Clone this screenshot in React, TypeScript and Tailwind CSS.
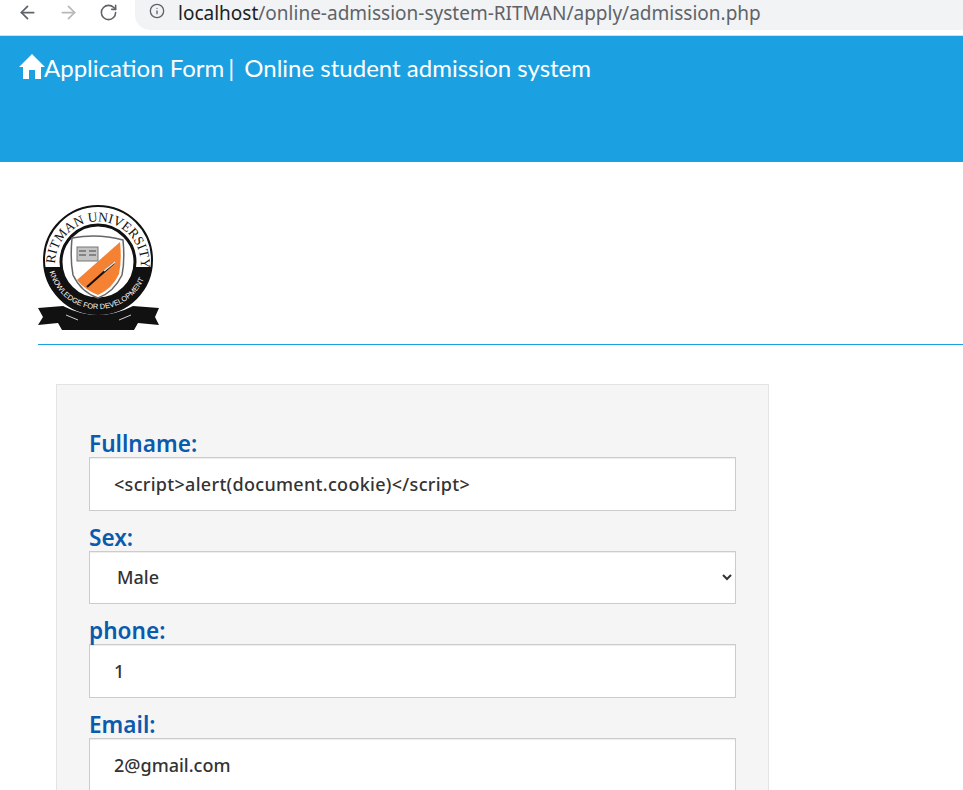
import React from 'react';
import { ArrowLeft, ArrowRight, RotateCw, Info } from 'lucide-react';

const Logo = () => (
  <svg width="121" height="125" viewBox="0 0 121 125">
    <defs>
      <path id="topArc" d="M 17.5 66 A 43 43 0 1 1 102.5 66" />
      <path id="bottomArc" d="M 11 64 A 50 50 0 0 0 109 64" />
    </defs>
    <circle cx="60" cy="55" r="54" fill="#fff" stroke="#111" strokeWidth="2" />
    <path d="M 6.5 62 A 54 54 0 0 0 113.5 62 L 98 62 L 92 50 L 28 50 L 22 62 Z" fill="#111" />
    <text fontFamily="Liberation Serif, serif" fontSize="13.5" fill="#111">
      <textPath href="#topArc" startOffset="5%">RITMAN UNIVERSITY</textPath>
    </text>
    <circle cx="60" cy="57" r="37" fill="#fff" stroke="#111" strokeWidth="3" />
    <text fontFamily="Liberation Sans, sans-serif" fontSize="7.4" fill="#fff">
      <textPath href="#bottomArc" startOffset="2%">KNOWLEDGE FOR DEVELOPMENT</textPath>
    </text>
    <path d="M 34 33 Q 60 28 85 35 Q 87 55 84 70 Q 76 87 60 93 Q 43 87 35 70 Q 32 55 34 33 Z" fill="#fff" stroke="#666" strokeWidth="1.5" />
    <path d="M 82 37 Q 84 55 81 69 Q 74 84 60 90 Q 47 85 39 75 Z" fill="#f58233" />
    <path d="M 49 82 L 76 58" stroke="#111" strokeWidth="2.2" />
    <path d="M 66 66 L 77 57" stroke="#e8e8e8" strokeWidth="1.6" />
    <rect x="39" y="42" width="21" height="14" fill="#c4c4c4" stroke="#777" />
    <path d="M 41 46 H 48 M 41 50 H 48 M 51 46 H 58 M 51 50 H 58" stroke="#444" />
    <path d="M 0 103 L 25 101 Q 60 119 95 101 L 121 103 L 117 112 L 121 120 L 100 118 L 96 125 L 24 125 L 20 118 L 0 120 L 5 112 Z" fill="#111" />
    <path d="M 28 110 L 40 115 M 93 110 L 81 115" stroke="#fff" strokeWidth="0.8" />
  </svg>
);

const labelClass = 'block h-[30px] text-[22.6px] leading-[33px] font-semibold text-[#0a5aad]';
const fieldClass =
  'block w-full h-[53.67px] border border-[#cccccc] bg-white text-[18px] font-medium text-[#333333] outline-none shadow-[inset_0_1px_1px_rgba(0,0,0,0.075)]';

const Field = ({ label, value, wide }: { label: string; value: string; wide?: boolean }) => (
  <div className="mb-[10px]">
    <label className={labelClass}>{label}</label>
    <input
      readOnly
      value={value}
      className={`${fieldClass} px-6 font-['Noto_Sans',sans-serif] ${wide ? 'tracking-[0.3px]' : ''}`}
    />
  </div>
);

export default function App() {
  return (
    <div className="h-[790px] w-[963px] overflow-hidden bg-white font-['Noto_Sans',sans-serif]">
      <div className="flex h-9 items-start border-b border-[#dcdcdc] bg-white">
        <div className="flex w-[135px] items-center gap-[20px] pl-[17px] pt-[2px]">
          <ArrowLeft size={21} className="text-[#5f6368]" />
          <ArrowRight size={21} className="text-[#b8b8b8]" />
          <RotateCw size={19} className="text-[#5f6368]" />
        </div>
        <div className="flex h-[30px] flex-1 items-start rounded-bl-[15px] bg-[#f1f3f4] pl-[14px]">
          <Info size={16} className="mt-[3px] text-[#5f6368]" />
          <span className="ml-[13px] -mt-[1px] text-[19px] text-[#5f6368]">
            <span className="text-[#202124]">localhost</span>/online-admission-system-RITMAN/apply/admission.php
          </span>
        </div>
      </div>

      <header className="h-[126px] bg-[#1ba1e2] pl-[19px] pt-[14px]">
        <div className="flex items-center font-['Lato',sans-serif] text-[24px] leading-9 text-white">
          <svg width="26" height="26" viewBox="0 0 26 26" fill="#fff" className="-mt-[4px] -mr-[1px] shrink-0">
            <path d="M13 1 L0 14 H4 V26 H10 V17 H16 V26 H22 V14 H26 Z" />
          </svg>
          <span>Application Form</span>
          <span className="ml-1">|</span>
          <span className="ml-[10px]">Online student admission system</span>
        </div>
      </header>

      <main className="pl-[38px] pt-[43px]">
        <Logo />
        <hr className="mt-[14px] border-0 border-t border-[#1ba1e2]" />
        <section className="ml-[18px] mt-[39px] w-[713px] border border-[#e3e3e3] bg-[#f5f5f5] px-[32px] pt-[42px]">
          <Field label="Fullname:" value="<script>alert(document.cookie)</script>" wide />
          <div className="mb-[10px]">
            <label className={labelClass}>Sex:</label>
            <select defaultValue="Male" className={`${fieldClass} pl-[23px] pr-[3px]`}>
              <option>Male</option>
              <option>Female</option>
            </select>
          </div>
          <Field label="phone:" value="1" />
          <Field label="Email:" value="2@gmail.com" />
        </section>
      </main>
    </div>
  );
}
